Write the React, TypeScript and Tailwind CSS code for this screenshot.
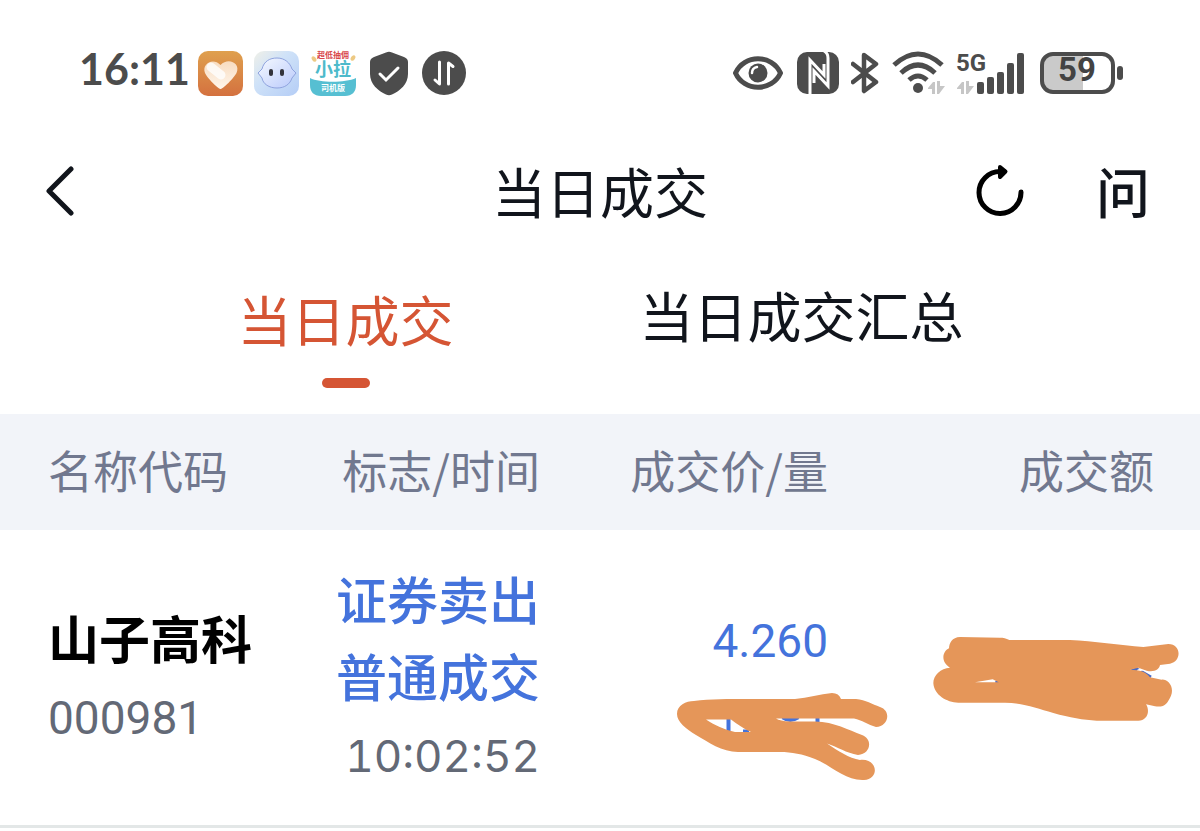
import React, { useState } from "react";

const fonts = {
  cjk: "font-['Noto_Sans_CJK_SC',sans-serif]",
  num: "font-['Roboto','Noto_Sans_CJK_SC',sans-serif]",
};

const tabs = ["当日成交", "当日成交汇总"];

function AppIcons() {
  return (
    <div className="flex items-center gap-[11px]">
      {/* heart */}
      <svg width="45" height="45" viewBox="0 0 45 45" aria-hidden="true">
        <defs>
          <linearGradient id="heart-bg" x1="0" y1="0" x2="0" y2="1">
            <stop offset="0" stopColor="#dfa04e" />
            <stop offset="1" stopColor="#d4713f" />
          </linearGradient>
          <linearGradient id="heart-fg" x1="0" y1="0" x2="0" y2="1">
            <stop offset="0" stopColor="#f8dcc0" />
            <stop offset="1" stopColor="#fff6ec" />
          </linearGradient>
        </defs>
        <rect width="45" height="45" rx="10" fill="url(#heart-bg)" />
        <path
          d="M22.500 38C20 38 8.500 26 7 22C3.500 13 15 6 22.500 14C30 6 43 12 38.500 22C36 27 25 38 22.500 38Z"
          fill="url(#heart-fg)"
        />
        <path d="M13 16L23 24" stroke="#fff" strokeWidth="9" strokeLinecap="round" opacity="0.8" />
      </svg>
      {/* robot */}
      <svg width="45" height="45" viewBox="0 0 45 45" aria-hidden="true">
        <defs>
          <linearGradient id="bot-bg" x1="0" y1="0" x2="1" y2="1">
            <stop offset="0" stopColor="#f0f0e8" />
            <stop offset="0.4" stopColor="#cfe2f8" />
            <stop offset="1" stopColor="#b4cdf6" />
          </linearGradient>
          <linearGradient id="bot-face" x1="0" y1="0" x2="1" y2="1">
            <stop offset="0" stopColor="#f6faff" />
            <stop offset="1" stopColor="#b9c9fb" />
          </linearGradient>
        </defs>
        <rect width="45" height="45" rx="10" fill="url(#bot-bg)" />
        <path
          d="M4 22L8 18C10 10 16 7 23 7C31 7 36 12 38 18L42 22L38 27C36 33 31 37 23 37C15 37 9 33 8 27Z"
          fill="url(#bot-face)"
          stroke="#8fa3de"
          strokeWidth="1"
        />
        <rect x="15" y="18" width="4" height="7" rx="2" fill="#33333b" />
        <rect x="26" y="18" width="4" height="7" rx="2" fill="#33333b" />
      </svg>
      <svg width="46" height="46" viewBox="0 0 46 46" className={fonts.cjk} role="img">
        <path d="M0 28C10 33 35 33 46 28V35C46 42 42 46 35 46H11C4 46 0 42 0 35Z" fill="#56bfd2" />
        <ellipse cx="4" cy="9" rx="2" ry="3" fill="#edc983" transform="rotate(-35 4 9)" />
        <ellipse cx="43" cy="8" rx="2" ry="3" fill="#edc983" transform="rotate(35 43 8)" />
        <text x="23" y="8" textAnchor="middle" fontSize="8" fontWeight="700" fill="#d8474c">超低抽佣</text>
        <text x="23" y="26" textAnchor="middle" fontSize="18" fontWeight="700" fill="#4dbacb">小拉</text>
        <text x="23" y="41" textAnchor="middle" fontSize="8" fontWeight="700" fill="#fff">司机版</text>
      </svg>
      <svg width="42" height="46" viewBox="0 0 42 46" fill="none" className="ml-px" aria-hidden="true">
        <path
          d="M18 2.500Q21 1 24 2.500L36 7Q40 8.500 40 12V24C40 34 32 41 24 44.500Q21 46 18 44.500C10 41 2 34 2 24V12Q2 8.500 6 7Z"
          fill="#4c4c4c"
        />
        <path d="M12 24L18 30L30 18" stroke="#fff" strokeWidth="3" strokeLinecap="round" />
      </svg>
      <svg width="44" height="44" viewBox="0 0 44 44" fill="none" className="ml-px" aria-hidden="true">
        <circle cx="22" cy="22" r="22" fill="#4c4c4c" />
        <path d="M17.500 11V33L13 29M26.500 33V12L31 15.500" stroke="#fff" strokeWidth="3" strokeLinecap="round" strokeLinejoin="round" />
      </svg>
    </div>
  );
}

function DataArrows() {
  return <path d="M0 7L5 1H7V13H4V8H0ZM9 0H12V5H17L11 13H9Z" />;
}

function SystemIcons() {
  return (
    <div className="flex items-center">
      {/* eye */}
      <svg width="50" height="46" viewBox="0 0 50 46" fill="none" aria-hidden="true">
        <path
          d="M2.500 23C11 4 39 4 47.500 23C39 42 11 42 2.500 23Z"
          stroke="#4c4c4c"
          strokeWidth="5"
          strokeLinejoin="round"
        />
        <circle cx="25" cy="23" r="9.500" fill="#4c4c4c" />
        <path d="M19 23Q19 18 24 17" stroke="#fff" strokeWidth="2.500" strokeLinecap="round" />
      </svg>
      {/* nfc */}
      <svg width="42" height="46" viewBox="0 0 42 46" className="ml-[14px]" aria-hidden="true">
        <rect y="2" width="42" height="42" rx="10" fill="#4c4c4c" />
        <g fill="none" stroke="#fff" strokeWidth="3">
          <path d="M13 45V10L27 25V14" />
          <path d="M27 1Q31 3 31 8V36L17 21V33" />
        </g>
      </svg>
      {/* bluetooth */}
      <svg width="28" height="46" viewBox="0 0 28 46" fill="none" className="ml-[12px]" aria-hidden="true">
        <path
          d="M2 14L25 32L13 41V5L25 14L2 32"
          stroke="#4c4c4c"
          strokeWidth="4.500"
          strokeLinecap="round"
          strokeLinejoin="round"
        />
      </svg>
      {/* wifi */}
      <svg width="54" height="46" viewBox="0 0 54 46" fill="none" className="ml-[13px]" aria-hidden="true">
        <path d="M2 15Q26 -7 50 15" stroke="#4c4c4c" strokeWidth="5" />
        <path d="M9 23Q26 7 43 23" stroke="#4c4c4c" strokeWidth="5" />
        <path d="M17 30Q26 22 35 30" stroke="#4c4c4c" strokeWidth="5" />
        <circle cx="26" cy="38" r="5" fill="#4c4c4c" />
        <g transform="translate(36 31)" fill="#c6c6c6">
          <DataArrows />
        </g>
      </svg>
      {/* cellular */}
      <svg width="68" height="46" viewBox="0 0 68 46" className="ml-[10px] font-['Roboto',sans-serif]" role="img">
        <text x="0" y="21" fontSize="24" fontWeight="700" fill="#4c4c4c">5G</text>
        <g transform="translate(1 31)" fill="#c6c6c6">
          <DataArrows />
        </g>
        <g fill="#4c4c4c">
          <rect x="21" y="32" width="7" height="12" rx="2" />
          <rect x="31" y="27" width="7" height="17" rx="2" />
          <rect x="41" y="22" width="7" height="22" rx="2" />
          <rect x="51" y="13" width="7" height="31" rx="2" />
          <rect x="61" y="3" width="7" height="41" rx="2" />
        </g>
      </svg>
      {/* battery */}
      <svg width="84" height="46" viewBox="0 0 84 46" className="ml-4 font-['Roboto',sans-serif]" role="img">
        <path d="M12 4H43V42H12Q2 42 2 32V14Q2 4 12 4Z" fill="#cacaca" />
        <rect x="2" y="4" width="71" height="38" rx="11" fill="none" stroke="#4c4c4c" strokeWidth="4" />
        <rect x="77" y="16" width="6" height="14" rx="3" fill="#4c4c4c" />
        <text x="37" y="31" textAnchor="middle" fontSize="33" fontWeight="700" fill="#434343">59</text>
      </svg>
    </div>
  );
}

/* hand-drawn marks that hide the amounts */
function QuantityMark() {
  return (
    <svg
      width="220"
      height="96"
      viewBox="672 688 220 96"
      fill="none"
      className="absolute -right-16 top-2"
      aria-hidden="true"
    >
      <g stroke="#4473dc">
        <path d="M728.500 712V736M817.500 712V724" strokeWidth="4" />
        <path d="M743 732H749M783 717Q790 722 798 717" strokeWidth="5" />
      </g>
      <path
        fillRule="evenodd"
        fill="#e59659"
        d="M677 714C677 705 686 701 694 701C710 699 730 699 745 699H795C808 698 820 694 832 693Q839 693 841 699H856C866 700 872 704 880 707C892 711 888 727 876 727C868 725 862 720 854 718.500H776Q780 721 790 721.500H815C835 722 848 730 862 735C873 739 871 754 858 755C846 753 838 747 827 743.500C838 751 849 758 860 760C878 758 880 779 864 780C846 781 832 766 815 759C802 754 792 752 780 752H738C722 752 708 742 696 735C686 729 677 722 677 714ZM706 719.500H731C737 724 744 729 751 732H735C725 730 714 725 706 719.500Z"
      />
    </svg>
  );
}

function AmountMark() {
  return (
    <svg
      width="280"
      height="120"
      viewBox="0 0 840 360"
      className="absolute -right-12 -top-5"
      aria-hidden="true"
    >
      <path d="M630 152L650 145L695 170L690 180L650 165ZM226 185L242 186V192H226Z" fill="#4969c4" />
      <path d="M648 158Q655 143 674 154Q660 155 654 162Z" fill="#fff" />
      <path
        fillRule="evenodd"
        fill="#e59659"
        d="M90 146C62 148 40 168 40 192C42 228 80 250 115 251H255C310 252 350 268 400 282C450 296 490 303 530 305H655C680 305 692 278 678 256L705 262C735 266 742 253 753 230C764 202 742 180 725 182L690 175C676 156 662 154 630 152L655 146L680 155C702 160 718 152 720 138L750 134C785 128 785 75 745 75L670 84C600 79 520 66 450 63H268C258 57 250 56 240 56L120 54C96 55 88 72 87 88C66 98 62 130 90 146ZM165 190L218 181L236 190Z"
      />
    </svg>
  );
}

export default function App() {
  const [active, setActive] = useState(0);

  return (
    <main className={`min-h-screen bg-white text-[#11151c] ${fonts.cjk}`}>
      {/* Status bar */}
      <div className="flex items-center justify-between pl-[79px] pr-[76px] pt-[46px]">
        <div className="flex items-center gap-2">
          <span className="font-['Lato',sans-serif] text-[43px] font-bold leading-[46px] pb-2 text-[#4c4c4c]">16:11</span>
          <AppIcons />
        </div>
        <SystemIcons />
      </div>

      {/* Title bar */}
      <header className="mt-[52px] grid grid-cols-[1fr_auto_1fr] items-center px-[50px]">
        <button type="button" aria-label="返回" className="-ml-1 justify-self-start">
          <svg width="28" height="50" viewBox="0 0 28 50" fill="none">
            <path d="M25 3L3 25L25 47" stroke="#11151c" strokeWidth="5" strokeLinecap="round" strokeLinejoin="round" />
          </svg>
        </button>
        <h1 className="text-[54px] leading-[78px]">当日成交</h1>
        <div className="flex items-center gap-[72px] justify-self-end">
          <button type="button" aria-label="刷新">
            <svg width="48" height="54" viewBox="0 0 48 54" fill="none">
              <path d="M45 28A21 21 0 1 1 24 7.500H28" stroke="#000" strokeWidth="5" strokeLinecap="round" />
              <path d="M24 3L29.500 7.500L24 13Z" fill="#000" stroke="#000" strokeWidth="4" strokeLinejoin="round" />
            </svg>
          </button>
          <button type="button" className="text-[54px] font-medium leading-[78px]">问</button>
        </div>
      </header>

      {/* Tabs */}
      <nav className="mt-[46px] grid grid-cols-[691fr_509fr]">
        {tabs.map((tab, i) => (
          <button
            key={tab}
            type="button"
            onClick={() => setActive(i)}
            className={
              i === active
                ? "flex flex-col items-center gap-5 pt-1 text-[54px] leading-[78px] text-[#d55534]"
                : "flex flex-col items-center gap-5 text-[54px] leading-[78px] -ml-[288px]"
            }
          >
            {tab}
            {i === active && <span className="h-[10px] w-12 rounded-full bg-[#d55534]" />}
          </button>
        ))}
      </nav>

      {/* Trades */}
      <table className="mt-[26px] w-full table-fixed border-collapse text-right">
        <thead className="bg-[#f2f4f9] text-[45px] leading-[112px] text-[#71788f]">
          <tr>
            <th className="w-[25%] pb-1 pl-12 text-left font-normal">名称代码</th>
            <th className="w-[20%] pb-1 font-normal">标志/时间</th>
            <th className="w-[24%] pb-1 font-normal">成交价/量</th>
            <th className="w-[31%] pb-1 pr-[46px] font-normal">成交额</th>
          </tr>
        </thead>
        <tbody>
          <tr className="border-b-[3px] border-[#e3e7e7] text-[51px] leading-[77px]">
            <td className="py-[30px] pl-12 text-left">
              <div className="font-bold text-black">山子高科</div>
              <div className={`pt-1 text-[46px] text-[#636976] ${fonts.num}`}>000981</div>
            </td>
            <td className="py-[30px] font-medium text-[#4473dc]">
              <div>证券卖出</div>
              <div>普通成交</div>
              <time className="block pt-1 font-['Inter',sans-serif] text-[44px] font-normal tabular-nums text-[#636976]">10:02:52</time>
            </td>
            <td className={`py-[30px] text-[46px] text-[#4473dc] ${fonts.num}`}>
              <div className="pt-1">4.260</div>
              <div className="relative h-[77px]">
                <QuantityMark />
              </div>
            </td>
            <td className="py-[30px] pr-12">
              <div className="relative h-[77px]">
                <AmountMark />
              </div>
            </td>
          </tr>
        </tbody>
      </table>
    </main>
  );
}
